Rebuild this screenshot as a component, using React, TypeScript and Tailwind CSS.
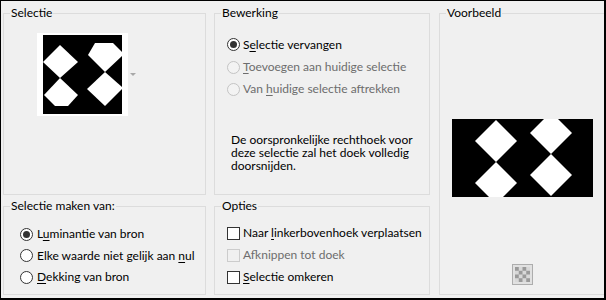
import React from "react";

function Radio({ checked, disabled }: { checked?: boolean; disabled?: boolean }) {
  return (
    <span
      className={`flex h-[13px] w-[13px] shrink-0 items-center justify-center rounded-full border ${
        disabled ? "border-[#c4c4c4] bg-[#f3f3f3]" : "border-[#333333] bg-white"
      }`}
    >
      {checked && <span className="h-[7px] w-[7px] rounded-full bg-[#333333]" />}
    </span>
  );
}

function Check({ disabled }: { disabled?: boolean }) {
  return (
    <span
      className={`h-[13px] w-[13px] shrink-0 border ${
        disabled ? "border-[#cccccc] bg-[#f0f0f0]" : "border-[#333333] bg-white"
      }`}
    />
  );
}

function U({ children }: { children: React.ReactNode }) {
  return <span className="underline decoration-1 underline-offset-[2px]">{children}</span>;
}

function Group({
  title,
  className,
  children,
}: {
  title: string;
  className?: string;
  children: React.ReactNode;
}) {
  return (
    <fieldset className={`min-w-0 border border-[#dcdcdc] ${className ?? ""}`}>
      <legend className="ml-[6px] px-[1px] leading-[16px] text-black">{title}</legend>
      {children}
    </fieldset>
  );
}

function SmallPreview() {
  return (
    <svg width="79" height="79" viewBox="0 0 79 79">
      <rect width="79" height="79" fill="#000" />
      <g fill="#fff">
        <polygon points="0,27 17,10 35,27 17,43" />
        <polygon points="17,43 1,60 12,71 25,71 35,60" />
        <polygon points="52,8 70,8 79,17 79,21 62,37 45,20" />
        <polygon points="62,37 44,54 62,71 79,54 79,52" />
      </g>
    </svg>
  );
}

function BigPreview() {
  return (
    <svg width="141" height="78" viewBox="0 0 141 78">
      <rect width="141" height="78" fill="#000" />
      <g fill="#fff">
        <polygon points="23,22 44,1 65,22 44,43" />
        <polygon points="23,64 44,43 65,64 51,78 37,78" />
        <polygon points="78,14 92,0 106,0 120,14 99,35" />
        <polygon points="78,56 99,35 120,56 99,77" />
      </g>
    </svg>
  );
}

function CheckerButton() {
  return (
    <div className="flex h-[21px] w-[21px] items-center justify-center border border-[#adadad] bg-[#e1e1e1]">
      <svg width="15" height="15" viewBox="0 0 16 16">
        <defs>
          <pattern id="chk" width="8" height="8" patternUnits="userSpaceOnUse">
            <rect width="8" height="8" fill="#d8d8d8" />
            <rect width="4" height="4" fill="#9a9a9a" />
            <rect x="4" y="4" width="4" height="4" fill="#9a9a9a" />
          </pattern>
        </defs>
        <rect width="16" height="16" fill="url(#chk)" />
      </svg>
    </div>
  );
}

export default function App() {
  return (
    <div className="h-[300px] w-[606px] overflow-hidden border-t border-r-2 border-b-2 border-l border-black bg-[#f0f0f0] font-['Lato',sans-serif] text-[12px] text-black">
      <div className="flex pt-[4px] pl-[2px]">
        <div className="grid w-[427px] shrink-0 grid-cols-[203px_216px] grid-rows-[190px_97px] gap-x-[8px] gap-y-[3px]">
          <Group title="Selectie">
            <div className="mt-[12px] ml-[33px] flex items-center">
              <div className="bg-white px-[6px] py-[2px]">
                <SmallPreview />
              </div>
              <span className="ml-[2px] h-0 w-0 border-x-[3px] border-t-[3px] border-x-transparent border-t-[#a8a8a8]" />
            </div>
          </Group>

          <Group title="Bewerking">
            <div className="mt-[12px] ml-[12px] flex flex-col">
              <label className="flex h-[23px] items-center gap-[3px]">
                <Radio checked />
                <span>
                  S<U>e</U>lectie vervangen
                </span>
              </label>
              <label className="flex h-[22px] items-center gap-[3px] text-[#6d6d6d]">
                <Radio disabled />
                <span>
                  <U>T</U>oevoegen aan huidige selectie
                </span>
              </label>
              <label className="flex h-[22px] items-center gap-[3px] text-[#6d6d6d]">
                <Radio disabled />
                <span>
                  Van <U>h</U>uidige selectie aftrekken
                </span>
              </label>
            </div>
            <p className="mt-[33px] ml-[16px] leading-[13px] whitespace-nowrap">
              De oorspronkelijke rechthoek voor
              <br />
              deze selectie zal het doek volledig
              <br />
              doorsnijden.
            </p>
          </Group>

          <Group title="Selectie maken van:">
            <div className="mt-[9px] ml-[16px] flex flex-col">
              <label className="flex h-[22px] items-center gap-[4px]">
                <Radio checked />
                <span>
                  L<U>u</U>minantie van bron
                </span>
              </label>
              <label className="flex h-[21px] items-center gap-[4px]">
                <Radio />
                <span>
                  Elke waarde niet gelijk aan <U>n</U>ul
                </span>
              </label>
              <label className="flex h-[22px] items-center gap-[4px]">
                <Radio />
                <span>
                  <U>D</U>ekking van bron
                </span>
              </label>
            </div>
          </Group>

          <Group title="Opties">
            <div className="mt-[8px] ml-[12px] flex flex-col">
              <label className="flex h-[22px] items-center gap-[3px]">
                <Check />
                <span>
                  Naar <U>l</U>inkerbovenhoek verplaatsen
                </span>
              </label>
              <label className="flex h-[22px] items-center gap-[3px] text-[#6d6d6d]">
                <Check disabled />
                <span>
                  Af<U>k</U>nippen tot doek
                </span>
              </label>
              <label className="flex h-[22px] items-center gap-[3px]">
                <Check />
                <span>
                  <U>S</U>electie omkeren
                </span>
              </label>
            </div>
          </Group>
        </div>

        <Group title="Voorbeeld" className="ml-[9px] h-[290px] w-[167px] shrink-0">
          <div className="flex flex-col items-center">
            <div className="mt-[98px]">
              <BigPreview />
            </div>
            <div className="mt-[67px]">
              <CheckerButton />
            </div>
          </div>
        </Group>
      </div>
    </div>
  );
}
